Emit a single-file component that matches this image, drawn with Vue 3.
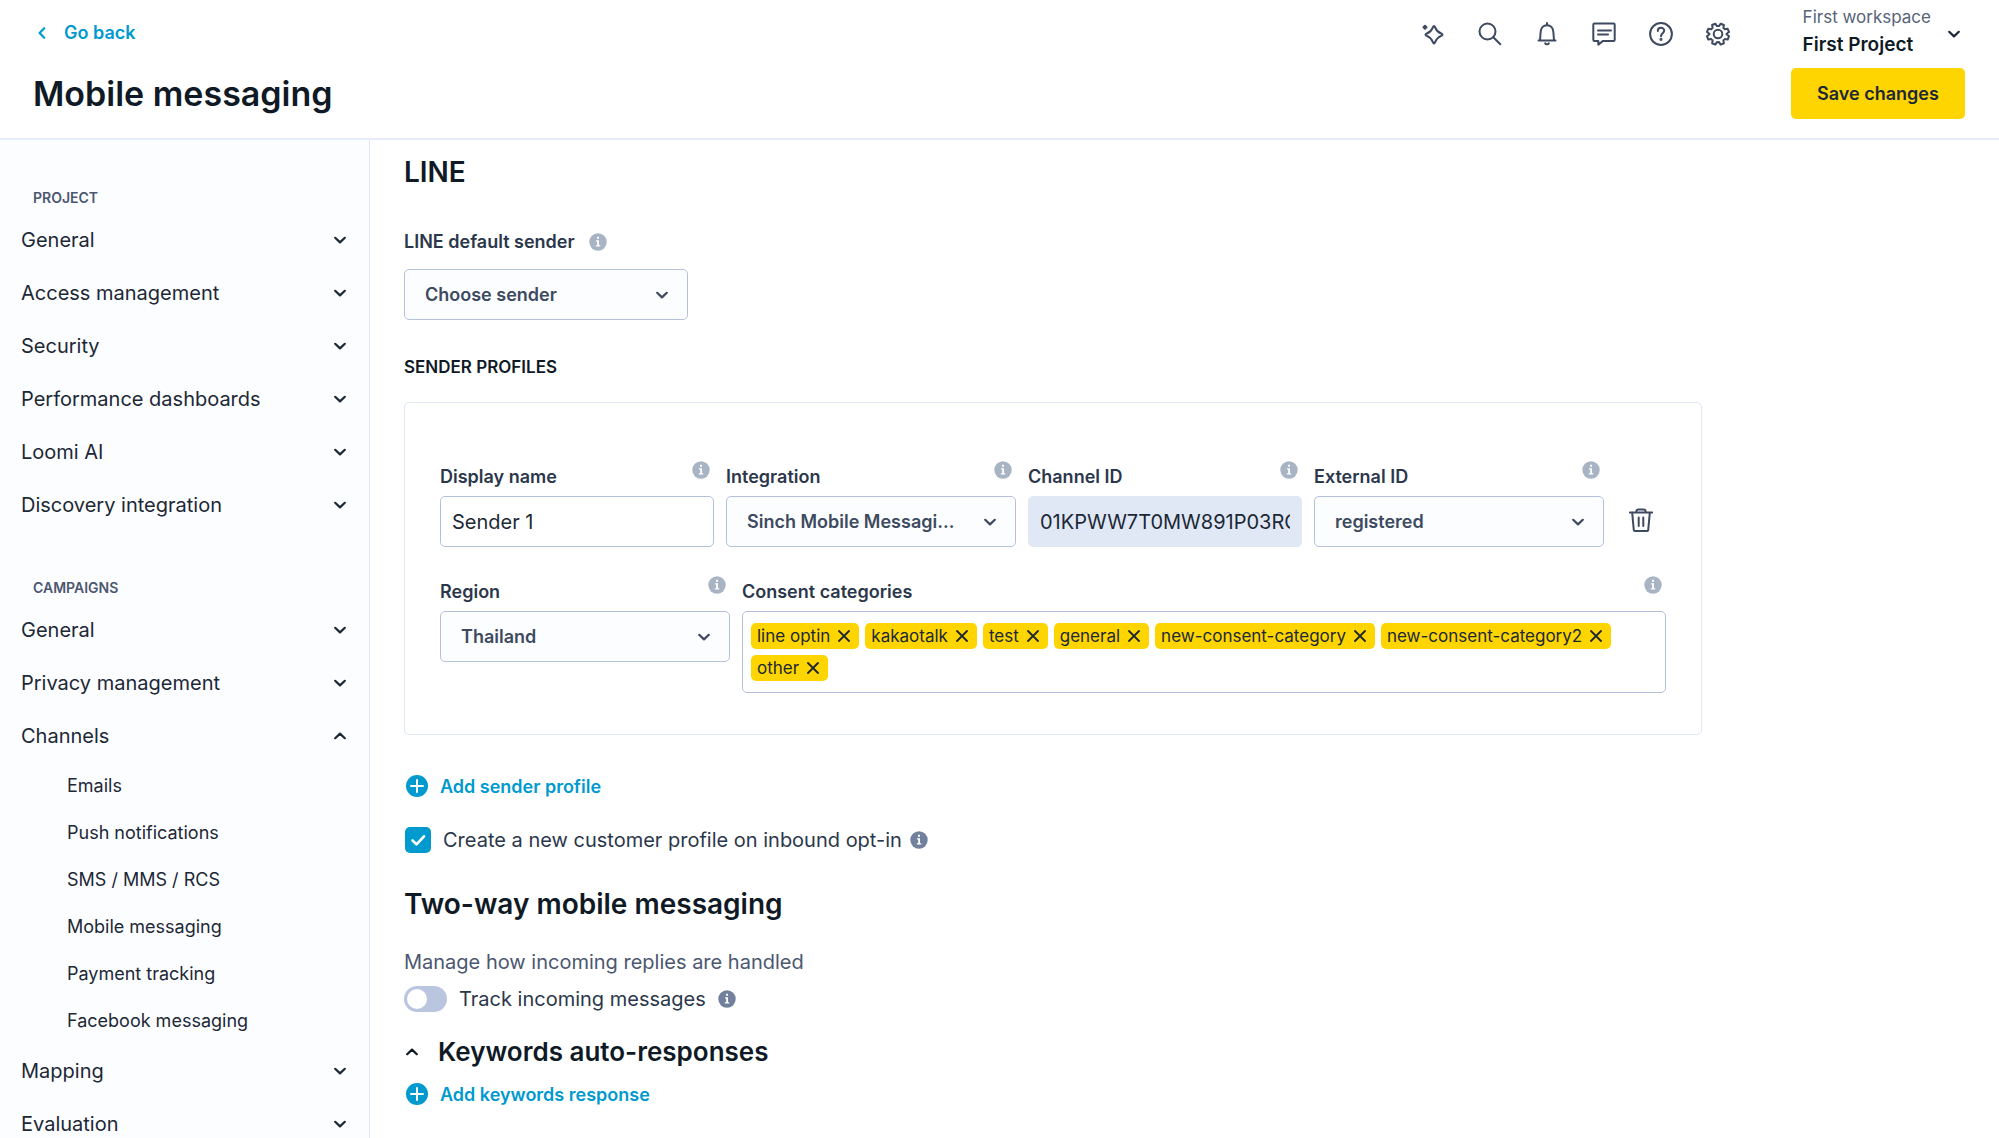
<script setup>
import { ref } from 'vue'

const projectItems = ['General', 'Access management', 'Security', 'Performance dashboards', 'Loomi AI', 'Discovery integration']

const campaignItems = [
  { name: 'General' },
  { name: 'Privacy management' },
  {
    name: 'Channels',
    open: true,
    children: ['Emails', 'Push notifications', 'SMS / MMS / RCS', 'Mobile messaging', 'Payment tracking', 'Facebook messaging']
  },
  { name: 'Mapping' },
  { name: 'Evaluation' }
]

const sections = [
  { title: 'PROJECT', items: projectItems.map(name => ({ name })) },
  { title: 'CAMPAIGNS', items: campaignItems }
]

const displayName = ref('Sender 1')
const channelId = ref('01KPWW7T0MW891P03RG')
const createProfile = ref(true)
const trackIncoming = ref(false)
const categories = ref(['line optin', 'kakaotalk', 'test', 'general', 'new-consent-category', 'new-consent-category2', 'other'])

function removeCategory(category) {
  categories.value = categories.value.filter(item => item !== category)
}
</script>

<template>
  <!-- shared icon shapes -->
  <svg class="sprite" aria-hidden="true">
    <symbol id="chevron" viewBox="0 0 12 12">
      <path d="M1.2 3.8 6 8.4 10.8 3.8" fill="none" stroke="currentColor" stroke-width="2.2" stroke-linecap="round" stroke-linejoin="round" />
    </symbol>
    <symbol id="info" viewBox="0 0 18 18">
      <circle cx="9" cy="9" r="8.7" fill="currentColor" />
      <path d="M8 3.8h2v2H8zM7 7.2h3v5h1.3v1.4H6.8v-1.4h1.4V8.6H7z" fill="#fff" />
    </symbol>
    <symbol id="plus" viewBox="0 0 22 22">
      <circle cx="11" cy="11" r="11" fill="currentColor" />
      <path d="M11 5v12M5 11h12" stroke="#fff" stroke-width="2" stroke-linecap="round" />
    </symbol>
    <symbol id="cross" viewBox="0 0 12 12">
      <path d="M1 1 11 11M11 1 1 11" stroke="currentColor" stroke-width="1.8" stroke-linecap="round" />
    </symbol>
  </svg>

  <div class="page">
    <header class="header">
      <div class="header-left">
        <a href="#" class="back">
          <svg class="chevron left"><use href="#chevron" /></svg>
          Go back
        </a>
        <h1>Mobile messaging</h1>
      </div>

      <div class="header-right">
        <div class="toolbar">
          <div class="tools">
            <button type="button" aria-label="Assistant">
              <svg viewBox="0 0 24 24">
                <path d="M13 4c.5 0 .8.5 1.1 1.3 1.3 3.3 2.8 4.9 6.1 6.2.8.3 1.3.7 1.3 1.2s-.5.9-1.3 1.2c-3.3 1.3-4.8 2.9-6.1 6.2-.3.8-.6 1.3-1.1 1.3s-.8-.5-1.1-1.3c-1.3-3.3-2.8-4.9-6.1-6.2-.8-.3-1.3-.7-1.3-1.2s.5-.9 1.3-1.2c3.3-1.3 4.8-2.9 6.1-6.2.3-.8.6-1.3 1.1-1.3Z" />
                <path class="solid" d="M4 3.8 5.5 5.3 4 6.8 2.5 5.3Z" />
              </svg>
            </button>
            <button type="button" aria-label="Search">
              <svg viewBox="0 0 24 24">
                <circle cx="9.5" cy="9.5" r="8" />
                <path d="m15.3 15.3 7 7" />
              </svg>
            </button>
            <button type="button" aria-label="Notifications">
              <svg viewBox="0 0 24 24">
                <path d="M3.5 18.5h17M5 18.500l.6-8.200c.2-4 2.600-7.100 6.400-7.100s6.200 3.100 6.400 7.100l.6 8.200M12 1v2M10.200 21.200c.3 1.400 3.300 1.400 3.600 0" />
              </svg>
            </button>
            <button type="button" aria-label="Messages">
              <svg viewBox="0 0 24 24">
                <path d="M2.5 1.5h19a1.2 1.2 0 0 1 1.2 1.2v15a1.2 1.2 0 0 1-1.2 1.2H11L6.300 22.700V18.900H2.500a1.200 1.200 0 0 1-1.200-1.200v-15a1.200 1.200 0 0 1 1.200-1.200ZM6 8.500h13M6 12.500h10" />
              </svg>
            </button>
            <button type="button" aria-label="Help">
              <svg viewBox="0 0 24 24">
                <circle cx="12" cy="12" r="10.9" />
                <path d="M8.8 9c0-4.200 6.400-4.100 6.400-.4 0 2.500-3.200 2.800-3.200 5.600" />
                <circle class="solid" cx="12" cy="17.3" r=".6" />
              </svg>
            </button>
            <button type="button" aria-label="Settings">
              <svg viewBox="0 0 24 24">
                <path d="M9.3 1.7 11 4.100a8 8 0 0 1 2 0l1.700-2.400 3.200 1.300-.5 2.900a8 8 0 0 1 1.400 1.400l2.900-.5 1.300 3.200L20.600 11.700v.6l2.400 2-1.300 3.200-2.900-.5a8 8 0 0 1-1.400 1.400l.5 2.900-3.200 1.300L13 20.100a8 8 0 0 1-2 0l-1.700 2.500-3.200-1.300.5-2.900A8 8 0 0 1 5.200 17l-2.900.5L1 14.300l2.400-2v-.6L1 10l1.300-3.200 2.900.5a8 8 0 0 1 1.400-1.400L6.100 3Z" />
                <circle cx="12" cy="12" r="4.3" />
              </svg>
            </button>
          </div>
          <button type="button" class="project">
            <span class="project-names">
              <span class="workspace">First workspace</span>
              <span class="project-name">First Project</span>
            </span>
            <svg class="chevron"><use href="#chevron" /></svg>
          </button>
        </div>
        <button type="button" class="save">Save changes</button>
      </div>
    </header>

    <div class="body">
      <nav class="sidebar" aria-label="Settings">
        <section v-for="section in sections" :key="section.title">
          <h2>{{ section.title }}</h2>
          <template v-for="item in section.items" :key="item.name">
            <button type="button" class="nav-item" :aria-expanded="!!item.open">
              {{ item.name }}
              <svg class="chevron" :class="{ up: item.open }"><use href="#chevron" /></svg>
            </button>
            <div v-if="item.open" class="sub-items">
              <a v-for="child in item.children" :key="child" href="#">{{ child }}</a>
            </div>
          </template>
        </section>
      </nav>

      <main class="content">
        <h2>LINE</h2>
        <div class="inline-label">
          <label for="default-sender">LINE default sender</label>
          <svg class="info"><use href="#info" /></svg>
        </div>
        <div class="select default-sender">
          <select id="default-sender">
            <option>Choose sender</option>
          </select>
          <svg class="chevron"><use href="#chevron" /></svg>
        </div>

        <h4>SENDER PROFILES</h4>
        <div class="card">
          <div class="fields">
            <div class="field">
              <div class="field-label">
                <label for="display-name">Display name</label>
                <svg class="info"><use href="#info" /></svg>
              </div>
              <input id="display-name" v-model="displayName" type="text" class="text-input" />
            </div>
            <div class="field wide">
              <div class="field-label">
                <label for="integration">Integration</label>
                <svg class="info"><use href="#info" /></svg>
              </div>
              <div class="select">
                <select id="integration">
                  <option>Sinch Mobile Messaging</option>
                </select>
                <svg class="chevron"><use href="#chevron" /></svg>
              </div>
            </div>
            <div class="field">
              <div class="field-label">
                <label for="channel-id">Channel ID</label>
                <svg class="info"><use href="#info" /></svg>
              </div>
              <input id="channel-id" v-model="channelId" type="text" class="text-input readonly" readonly />
            </div>
            <div class="field wide">
              <div class="field-label">
                <label for="external-id">External ID</label>
                <svg class="info"><use href="#info" /></svg>
              </div>
              <div class="select">
                <select id="external-id">
                  <option>registered</option>
                </select>
                <svg class="chevron"><use href="#chevron" /></svg>
              </div>
            </div>
            <button type="button" class="delete" aria-label="Delete sender">
              <svg viewBox="0 0 24 24">
                <path d="M.8 4.500h22.400M7.500 4.300V3a1.600 1.600 0 0 1 1.600-1.600h5.800A1.600 1.600 0 0 1 16.500 3v1.300M3.200 4.800l1.600 17.300a1 1 0 0 0 1 .9h12.400a1 1 0 0 0 1-.9l1.600-17.300M9.700 9.500v8.500M14.300 9.500v8.500" />
              </svg>
            </button>
          </div>

          <div class="fields">
            <div class="field wide">
              <div class="field-label">
                <label for="region">Region</label>
                <svg class="info"><use href="#info" /></svg>
              </div>
              <div class="select">
                <select id="region">
                  <option>Thailand</option>
                </select>
                <svg class="chevron"><use href="#chevron" /></svg>
              </div>
            </div>
            <div class="field consent">
              <div class="field-label">
                <label for="consent">Consent categories</label>
                <svg class="info"><use href="#info" /></svg>
              </div>
              <div class="tags">
                <span v-for="category in categories" :key="category" class="tag">
                  {{ category }}
                  <button type="button" :aria-label="'Remove ' + category" @click="removeCategory(category)">
                    <svg><use href="#cross" /></svg>
                  </button>
                </span>
                <input id="consent" type="text" />
              </div>
            </div>
          </div>
        </div>

        <button type="button" class="add">
          <svg><use href="#plus" /></svg>
          Add sender profile
        </button>

        <div class="option">
          <input id="create-profile" v-model="createProfile" type="checkbox" class="checkbox" />
          <label for="create-profile">Create a new customer profile on inbound opt-in</label>
          <svg class="info dark"><use href="#info" /></svg>
        </div>

        <h2>Two-way mobile messaging</h2>
        <p>Manage how incoming replies are handled</p>
        <div class="option toggle-option">
          <input id="track" v-model="trackIncoming" type="checkbox" role="switch" class="toggle" />
          <label for="track">Track incoming messages</label>
          <svg class="info dark"><use href="#info" /></svg>
        </div>

        <h3>
          <button type="button" class="collapse">
            <svg class="chevron up"><use href="#chevron" /></svg>
            Keywords auto-responses
          </button>
        </h3>
        <button type="button" class="add">
          <svg><use href="#plus" /></svg>
          Add keywords response
        </button>
      </main>
    </div>
  </div>
</template>

<style>
body {
  margin: 0;
  background: #fff;
}
</style>

<style scoped>
.sprite {
  display: none;
}

.page {
  display: flex;
  flex-direction: column;
  height: 100vh;
  overflow: hidden;
  font-family: Inter, "Liberation Sans", sans-serif;
  font-size: 20px;
  color: #1c2836;
}

.page * {
  box-sizing: border-box;
}

button,
input,
select {
  font: inherit;
  color: inherit;
}

button {
  display: flex;
  align-items: center;
  padding: 0;
  border: none;
  background: none;
  cursor: pointer;
}

a {
  color: inherit;
  text-decoration: none;
}

h1,
h2,
h3,
h4,
p {
  margin: 0;
}

h1,
h2,
h3,
h4 {
  font-weight: 600;
  color: #0f1a26;
}

.chevron {
  flex: none;
  width: 12px;
  height: 12px;
}

.chevron.up {
  transform: rotate(180deg);
}

.chevron.left {
  transform: rotate(90deg);
}

.info {
  flex: none;
  width: 18px;
  height: 18px;
  color: #a8b3c4;
}

.info.dark {
  color: #71809c;
}

/* Header */
.header {
  display: flex;
  justify-content: space-between;
  flex: none;
  height: 140px;
  padding: 0 34px 0 33px;
  border-bottom: 2px solid #e6ecf9;
}

.header-left {
  display: flex;
  flex-direction: column;
  padding-top: 20px;
}

.back {
  display: flex;
  align-items: center;
  gap: 16px;
  padding-left: 3px;
  font-size: 18px;
  font-weight: 600;
  line-height: 26px;
  color: #009acf;
}

h1 {
  margin-top: 26px;
  font-size: 34px;
  line-height: 44px;
}

.header-right {
  display: flex;
  flex-direction: column;
  align-items: flex-end;
}

.toolbar {
  display: flex;
  gap: 73px;
  height: 68px;
}

.tools {
  display: flex;
  align-items: center;
  gap: 33px;
}

.tools svg,
.delete svg {
  width: 24px;
  height: 24px;
  fill: none;
  stroke: #3d4a60;
  stroke-width: 2;
  stroke-linecap: round;
  stroke-linejoin: round;
}

.tools .solid {
  fill: #3d4a60;
}

.project {
  gap: 17px;
  padding-right: 5px;
  text-align: left;
}

.project-names {
  display: flex;
  flex-direction: column;
  padding-bottom: 7px;
}

.workspace {
  font-size: 17px;
  line-height: 28px;
  color: #56637a;
}

.project-name {
  font-size: 19px;
  font-weight: 600;
  line-height: 28px;
  color: #0f1a26;
}

.save {
  justify-content: center;
  width: 174px;
  height: 51px;
  border-radius: 5px;
  background: #ffd500;
  font-size: 18px;
  font-weight: 600;
}

/* Layout */
.body {
  display: flex;
  flex: 1;
  min-height: 0;
}

.sidebar {
  display: flex;
  flex-direction: column;
  gap: 41px;
  flex: none;
  width: 370px;
  padding-top: 42px;
  border-right: 1px solid #dfe6f5;
  background: #fcfdff;
  overflow: hidden;
}

.sidebar h2 {
  padding-left: 33px;
  font-size: 14px;
  line-height: 31px;
  color: #4b5770;
}

.nav-item {
  justify-content: space-between;
  width: 100%;
  height: 53px;
  padding: 0 23px 0 21px;
}

.sub-items {
  display: flex;
  flex-direction: column;
  gap: 1px;
  padding: 1px 0 0 67px;
}

.sub-items a {
  font-size: 18px;
  line-height: 46px;
}

/* Main content */
.content {
  flex: 1;
  min-width: 0;
  padding: 12px 34px 0;
  overflow: hidden;
}

.content h2 {
  font-size: 28px;
  line-height: 40px;
}

label {
  color: #2b374b;
}

.inline-label,
.field-label {
  display: flex;
  font-size: 18px;
  font-weight: 600;
}

.inline-label {
  align-items: center;
  gap: 14px;
  margin-top: 36px;
  line-height: 28px;
}

.select {
  position: relative;
  height: 51px;
}

.select select {
  width: 100%;
  height: 100%;
  padding: 0 58px 0 20px;
  border: 1px solid #b4c1dc;
  border-radius: 5px;
  background: #fcfdff;
  appearance: none;
  font-size: 18px;
  font-weight: 600;
  color: #3d4a60;
  text-overflow: ellipsis;
}

.select .chevron {
  position: absolute;
  top: 20px;
  right: 20px;
  color: #3d4a60;
  pointer-events: none;
}

.default-sender {
  width: 284px;
  margin-top: 13px;
}

h4 {
  margin-top: 33px;
  font-size: 17px;
  line-height: 28px;
}

.card {
  display: flex;
  flex-direction: column;
  gap: 29px;
  max-width: 1298px;
  margin-top: 21px;
  padding: 58px 35px 41px;
  border: 1px solid #dfe6f5;
  border-radius: 5px;
}

.fields {
  display: flex;
  gap: 12px;
}

.field {
  flex: 274 1 0;
  min-width: 0;
}

.field.wide {
  flex: 290 1 0;
}

.field.consent {
  flex: 924 1 0;
}

.field-label {
  justify-content: space-between;
  height: 35px;
  padding-right: 4px;
}

.field-label label {
  line-height: 32px;
}

.text-input {
  width: 100%;
  height: 51px;
  padding: 0 11px;
  border: 1px solid #b4c1dc;
  border-radius: 5px;
  background: #fff;
}

.text-input.readonly {
  border-color: #e0e7f5;
  background: #e0e7f5;
}

.delete {
  align-self: flex-end;
  justify-content: center;
  width: 50px;
  height: 54px;
}

.tags {
  display: flex;
  flex-wrap: wrap;
  gap: 6px;
  padding: 11px 8px;
  border: 1px solid #b4c1dc;
  border-radius: 5px;
}

.tag {
  display: flex;
  align-items: center;
  gap: 8px;
  height: 26px;
  padding: 0 9px 0 6px;
  border-radius: 5px;
  background: #ffd500;
  font-size: 17px;
}

.tag svg {
  width: 12px;
  height: 12px;
}

.tags input {
  flex: 1;
  min-width: 40px;
  height: 26px;
  padding: 0;
  border: none;
  outline: none;
}

.add {
  gap: 12px;
  height: 28px;
  padding-left: 2px;
  font-size: 18px;
  font-weight: 600;
  color: #009acf;
}

.add svg {
  width: 22px;
  height: 22px;
}

.card + .add {
  margin-top: 37px;
}

.option {
  display: flex;
  align-items: center;
  gap: 8px;
  height: 28px;
  margin-top: 26px;
}

.option label {
  padding-left: 4px;
}

.checkbox {
  width: 26px;
  height: 26px;
  margin: 0 0 0 1px;
  border-radius: 5px;
  appearance: none;
}

.checkbox:not(:checked) {
  border: 1px solid #b4c1dc;
}

.checkbox:checked {
  background: #009acf url("data:image/svg+xml,%3Csvg xmlns='http://www.w3.org/2000/svg' viewBox='0 0 26 26'%3E%3Cpath d='m7.5 13.5 4 3.8 7.5-8' fill='none' stroke='%23fff' stroke-width='2.6' stroke-linecap='round' stroke-linejoin='round'/%3E%3C/svg%3E");
}

.option + h2 {
  margin-top: 30px;
}

.content p {
  margin-top: 24px;
  line-height: 28px;
  color: #4b5770;
}

.toggle-option {
  gap: 12px;
  margin-top: 9px;
}

.toggle-option label {
  padding-left: 0;
}

.toggle {
  display: flex;
  align-items: center;
  width: 43px;
  height: 26px;
  margin: 0;
  padding: 0 3px;
  border-radius: 13px;
  background: #bac6e0;
  appearance: none;
}

.toggle::before {
  content: "";
  width: 20px;
  height: 20px;
  border-radius: 50%;
  background: #fff;
}

.toggle:checked {
  justify-content: flex-end;
  background: #009acf;
}

h3 {
  margin-top: 21px;
  font-size: 26px;
  line-height: 36px;
}

.collapse {
  gap: 20px;
  height: 36px;
  padding-left: 2px;
}

h3 + .add {
  margin-top: 10px;
}
</style>
